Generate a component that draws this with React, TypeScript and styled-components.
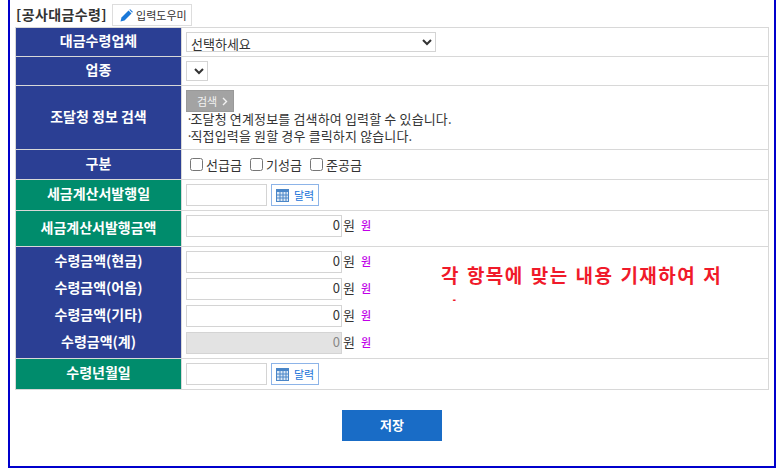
import React from "react"
import styled, { createGlobalStyle } from "styled-components"

const GlobalStyle = createGlobalStyle`
    html, body {
        margin: 0;
        padding: 0;
        background: #fff;
    }
    body {
        padding: 0 7px 8px 8px;
        font-family: "Noto Sans CJK KR", "Noto Sans", sans-serif;
        font-size: 13px;
        color: #333;
    }
`

const Frame = styled.div`
    position: relative;
    box-sizing: border-box;
    height: 468px;
    padding: 3px 5px 0 5px;
    border: 2px solid #0000cc;
    border-top: none;
`

const TitleBar = styled.div`
    display: flex;
    align-items: center;
    gap: 5px;
    height: 24px;
`

const Title = styled.h2`
    margin: 0 0 0 1px;
    font-size: 14px;
    line-height: 20px;
    font-weight: 700;
    color: #333;
    letter-spacing: 0.4px;
    padding-bottom: 3px;
`

const HelpButton = styled.button`
    display: flex;
    align-items: center;
    gap: 3px;
    box-sizing: border-box;
    width: 80px;
    height: 22px;
    padding: 0 0 0 7px;
    background: #fff;
    border: 1px solid #ddd;
    font: inherit;
    font-size: 11px;
    color: #333;
    white-space: nowrap;
`

const FormTable = styled.table`
    width: 754px;
    table-layout: fixed;
    border-collapse: collapse;
`

const Head = styled.th<{ $bg: "navy" | "green"; $h: number }>`
    box-sizing: border-box;
    width: 166px;
    height: ${({ $h }) => $h}px;
    padding: 0 0 4px 0;
    background: ${({ $bg }) => ($bg === "navy" ? "#2b3f94" : "#008c6c")};
    border: 1px solid #d8d8d8;
    color: #fff;
    font-size: 14px;
    font-weight: 700;
    line-height: 18px;
    text-align: center;
    vertical-align: middle;
`

const Cell = styled.td<{ $top?: boolean }>`
    padding: ${({ $top }) => ($top ? "4px 0 0 4px" : "0 0 0 4px")};
    border: 1px solid #d8d8d8;
    vertical-align: ${({ $top }) => ($top ? "top" : "middle")};
`

const Line = styled.div`
    display: flex;
    align-items: center;
    height: 22px;
`

const Select = styled.select<{ $w: number }>`
    box-sizing: border-box;
    width: ${({ $w }) => $w}px;
    height: 20px;
    padding: 0;
    background: #fff;
    border: 1px solid #d4d4d4;
    font: inherit;
    font-size: 13px;
    color: #333;
`

const SearchButton = styled.button`
    display: flex;
    align-items: center;
    gap: 5px;
    box-sizing: border-box;
    width: 48px;
    height: 22px;
    padding: 0 0 0 10px;
    background: #a3a3a3;
    border: 1px solid #999;
    color: #f2f2f2;
    font: inherit;
    font-size: 11px;
`

const Hints = styled.div`
    margin-top: -1px;
`

const Hint = styled.p`
    margin: 0 0 2px 0;
    font-size: 13px;
    line-height: 15px;
    letter-spacing: 0.15px;
    color: #333;
`

const HintDot = styled.span`
    margin-right: -3px;
`

const Checks = styled.div`
    display: flex;
    align-items: center;
    gap: 8px;
    padding-left: 4px;
`

const CheckLabel = styled.label`
    display: flex;
    align-items: center;
    width: 52px;
    gap: 3px;
    font-size: 13px;
    color: #333;
    white-space: nowrap;
`

const CheckBox = styled.input`
    width: 13px;
    height: 13px;
    margin: 0;
`

const DateInput = styled.input`
    box-sizing: border-box;
    width: 81px;
    height: 22px;
    padding: 0 2px;
    background: #fff;
    border: 1px solid #d4d4d4;
`

const CalendarButton = styled.button`
    display: flex;
    align-items: center;
    gap: 5px;
    box-sizing: border-box;
    width: 48px;
    height: 22px;
    margin-left: 4px;
    padding: 0 0 0 4px;
    background: #fff;
    border: 1px solid #8db4e8;
    color: #1a73d8;
    font: inherit;
    font-size: 11px;
`

const Money = styled.input`
    box-sizing: border-box;
    width: 156px;
    height: 22px;
    padding: 0 1px 3px 2px;
    background: ${({ disabled }) => (disabled ? "#e3e3e3" : "#fff")};
    border: 1px solid #d4d4d4;
    font: inherit;
    font-size: 13px;
    color: ${({ disabled }) => (disabled ? "#888" : "#333")};
    text-align: right;
`

const Won = styled.span`
    margin: 0 0 4px 1px;
    font-size: 13px;
    color: #333;
`

const WonHint = styled.span`
    margin: 0 0 3px 6px;
    font-size: 11px;
    font-weight: 500;
    color: #c000e8;
`

const Stack = styled.div`
    display: flex;
    flex-direction: column;
    gap: 5px;
`

const HeadLine = styled.span`
    display: block;
    line-height: 22px;
`

const Notice = styled.div`
    position: absolute;
    left: 431px;
    top: 258px;
    width: 285px;
    height: 43px;
    overflow: hidden;
    font-size: 19px;
    font-weight: 700;
    line-height: 33px;
    letter-spacing: 1.4px;
    word-spacing: 1.4px;
    color: #f01a2a;
    word-break: break-all;
`

const Footer = styled.div`
    display: flex;
    justify-content: center;
    padding-top: 20px;
`

const SaveButton = styled.button`
    width: 100px;
    height: 31px;
    padding: 0 0 2px 0;
    background: #196cc6;
    border: none;
    color: #fff;
    font: inherit;
    font-size: 13px;
    font-weight: 700;
`

const PencilIcon = () => (
    <svg width="13" height="13" viewBox="0 0 13 13">
        <path d="M0.5 12.5 L1.5 8.5 L8.5 1.5 L11.5 4.5 L4.5 11.5 Z" fill="#1a78d8" />
        <path d="M9.3 0.8 L10.2 0.2 L12.8 2.8 L12.2 3.7 Z" fill="#1a78d8" />
    </svg>
)

const CalendarIcon = () => (
    <svg width="13" height="13" viewBox="0 0 13 13">
        <rect x="0" y="0" width="13" height="13" fill="#4a86c8" />
        <rect x="1" y="3" width="11" height="9" fill="#dce8f5" />
        <path d="M4 3v9M7 3v9M10 3v9M1 6h11M1 9h11" stroke="#4a86c8" strokeWidth="1" />
    </svg>
)

const ChevronIcon = () => (
    <svg width="6" height="9" viewBox="0 0 6 9">
        <path d="M1 1 L4.5 4.5 L1 8" fill="none" stroke="#f2f2f2" strokeWidth="1.4" />
    </svg>
)

const DateField = () => (
    <Line>
        <DateInput type="text" />
        <CalendarButton type="button">
            <CalendarIcon />
            달력
        </CalendarButton>
    </Line>
)

const MoneyField = ({ disabled }: { disabled?: boolean }) => (
    <Line>
        <Money type="text" defaultValue="0" disabled={disabled} />
        <Won>원</Won>
        <WonHint>원</WonHint>
    </Line>
)

export default function App() {
    return (
        <Frame>
            <GlobalStyle />
            <TitleBar>
                <Title>[공사대금수령]</Title>
                <HelpButton type="button">
                    <PencilIcon />
                    입력도우미
                </HelpButton>
            </TitleBar>
            <FormTable>
                <tbody>
                    <tr>
                        <Head $bg="navy" $h={29}>대금수령업체</Head>
                        <Cell>
                            <Select $w={250}>
                                <option>선택하세요</option>
                            </Select>
                        </Cell>
                    </tr>
                    <tr>
                        <Head $bg="navy" $h={29}>업종</Head>
                        <Cell>
                            <Select $w={22}>
                                <option></option>
                            </Select>
                        </Cell>
                    </tr>
                    <tr>
                        <Head $bg="navy" $h={64}>조달청 정보 검색</Head>
                        <Cell $top>
                            <SearchButton type="button">검색<ChevronIcon /></SearchButton>
                            <Hints>
                                <Hint><HintDot>·</HintDot>조달청 연계정보를 검색하여 입력할 수 있습니다.</Hint>
                                <Hint><HintDot>·</HintDot>직접입력을 원할 경우 클릭하지 않습니다.</Hint>
                            </Hints>
                        </Cell>
                    </tr>
                    <tr>
                        <Head $bg="navy" $h={30}>구분</Head>
                        <Cell>
                            <Checks>
                                <CheckLabel><CheckBox type="checkbox" />선급금</CheckLabel>
                                <CheckLabel><CheckBox type="checkbox" />기성금</CheckLabel>
                                <CheckLabel><CheckBox type="checkbox" />준공금</CheckLabel>
                            </Checks>
                        </Cell>
                    </tr>
                    <tr>
                        <Head $bg="green" $h={31}>세금계산서발행일</Head>
                        <Cell><DateField /></Cell>
                    </tr>
                    <tr>
                        <Head $bg="green" $h={36}>세금계산서발행금액</Head>
                        <Cell $top><MoneyField /></Cell>
                    </tr>
                    <tr>
                        <Head $bg="navy" $h={112}>
                            <Stack>
                                <HeadLine>수령금액(현금)</HeadLine>
                                <HeadLine>수령금액(어음)</HeadLine>
                                <HeadLine>수령금액(기타)</HeadLine>
                                <HeadLine>수령금액(계)</HeadLine>
                            </Stack>
                        </Head>
                        <Cell>
                            <Stack>
                                <MoneyField />
                                <MoneyField />
                                <MoneyField />
                                <MoneyField disabled />
                            </Stack>
                        </Cell>
                    </tr>
                    <tr>
                        <Head $bg="green" $h={31}>수령년월일</Head>
                        <Cell><DateField /></Cell>
                    </tr>
                </tbody>
            </FormTable>
            <Notice>각 항목에 맞는 내용 기재하여 저장</Notice>
            <Footer>
                <SaveButton type="button">저장</SaveButton>
            </Footer>
        </Frame>
    )
}
